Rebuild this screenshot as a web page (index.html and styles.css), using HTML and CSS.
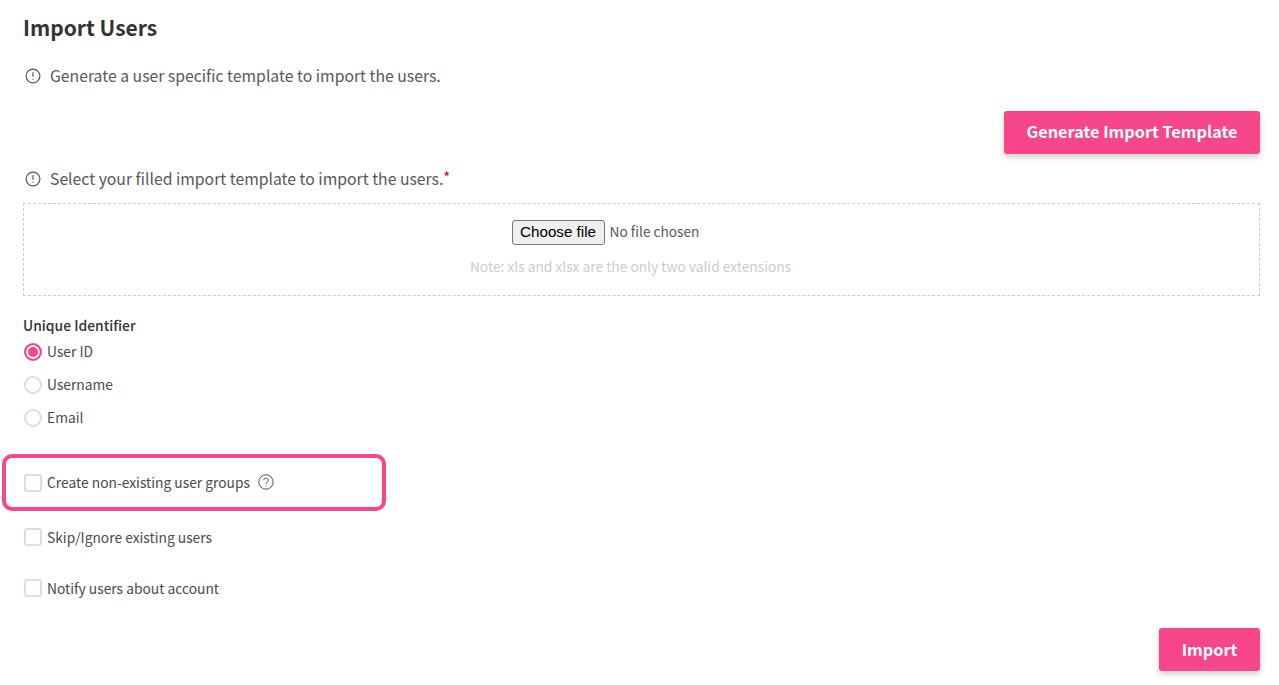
FILE: index.html
```html
<!DOCTYPE html>
<html lang="en">
<head>
    <meta charset="UTF-8">
    <meta name="viewport" content="width=device-width, initial-scale=1.0">
    <title>Import Users</title>
    <link rel="stylesheet" href="styles.css">
</head>
<body>
    <div class="import-page">
        <h1 class="title">Import Users</h1>

        <p class="info info-first">
            <svg class="info-icon" viewBox="0 0 16 16" width="16" height="16"><circle cx="8" cy="8" r="6.9"/><path d="M8 4.2v4.6M8 10.8v1"/></svg>
            <span>Generate a user specific template to import the users.</span>
        </p>

        <div class="template-row">
            <button class="btn btn-template">Generate Import Template</button>
        </div>

        <p class="info info-second">
            <svg class="info-icon" viewBox="0 0 16 16" width="16" height="16"><circle cx="8" cy="8" r="6.9"/><path d="M8 4.2v4.6M8 10.8v1"/></svg>
            <span>Select your filled import template to import the users.<span class="required">*</span></span>
        </p>

        <div class="dropzone">
            <div class="file-row">
                <button class="file-button">Choose file</button>
                <span class="file-name">No file chosen</span>
            </div>
            <div class="file-note">Note: xls and xlsx are the only two valid extensions</div>
        </div>

        <div class="field-label">Unique Identifier</div>
        <div class="radio-group">
            <label class="option"><span class="radio radio-on"></span>User ID</label>
            <label class="option"><span class="radio"></span>Username</label>
            <label class="option"><span class="radio"></span>Email</label>
        </div>

        <div class="checks">
            <label class="option check-groups">
                <span class="checkbox"></span>Create non-existing user groups
                <svg class="help-icon" viewBox="0 0 16 16" width="16" height="16"><circle cx="8" cy="8" r="7.2"/><path d="M5.8 6.2a2.2 2.2 0 1 1 3.4 1.9c-.8.5-1.2.9-1.2 1.9M8 11.6v1"/></svg>
            </label>
            <label class="option check-skip"><span class="checkbox"></span>Skip/Ignore existing users</label>
            <label class="option check-notify"><span class="checkbox"></span>Notify users about account</label>
        </div>

        <div class="import-row">
            <button class="btn btn-import">Import</button>
        </div>

        <div class="highlight"></div>
    </div>
</body>
</html>
```

FILE: styles.css
```css
body {
    margin: 0;
    background-color: #fff;
    color: #4a4a4a;
    font-family: "Noto Sans CJK SC", "Noto Sans", sans-serif;
}

.import-page {
    position: relative;
    height: 685px;
    padding: 0 19px 0 23px;
    overflow: hidden;
    box-sizing: border-box;
}

.title {
    margin: 0;
    padding-top: 11px;
    font-size: 21px;
    line-height: 33px;
    font-weight: 700;
    color: #333;
}

.info {
    display: flex;
    align-items: center;
    margin: 0;
    font-size: 15.75px;
    line-height: 26px;
    color: #585858;
}

.info-first {
    margin-top: 19px;
}

.info-second {
    margin-top: 12px;
}

.info-icon {
    margin: 0 9px 0 2px;
    fill: none;
    stroke: #555;
    stroke-width: 1.2;
}

.required {
    position: relative;
    top: -2px;
    color: #d0021b;
    font-size: 15px;
}

.template-row {
    display: flex;
    justify-content: flex-end;
    margin-top: 22px;
}

.import-row {
    display: flex;
    justify-content: flex-end;
    margin-top: 30px;
}

.btn {
    height: 43px;
    padding-bottom: 3px;
    border: none;
    border-radius: 3px;
    background-color: #f7468a;
    box-shadow: 0 3px 6px rgba(0, 0, 0, 0.2);
    color: #fff;
    font-family: inherit;
    font-size: 16.3px;
    font-weight: 700;
}

.btn-template {
    width: 256px;
    padding-bottom: 5px;
}

.btn-import {
    width: 101px;
}

.dropzone {
    height: 93px;
    margin-top: 11px;
    border: 1px dashed #ccc;
    box-sizing: border-box;
    text-align: center;
}

.file-row {
    display: flex;
    justify-content: center;
    align-items: center;
    padding-top: 16px;
    padding-right: 72px;
}

.file-button {
    width: 93px;
    height: 25px;
    padding: 0 0 3px;
    border: 1px solid #777;
    border-radius: 3px;
    background-color: #efefef;
    color: #000;
    font-family: "Liberation Sans", Arial, sans-serif;
    font-size: 15.2px;
}

.file-name {
    margin-left: 5px;
    padding-bottom: 4px;
    font-size: 13.7px;
    color: #585858;
}

.file-note {
    margin-top: 11px;
    padding-right: 22px;
    font-size: 13.75px;
    line-height: 20px;
    color: #ccc;
}

.field-label {
    margin-top: 19px;
    font-size: 13.9px;
    line-height: 20px;
    font-weight: 500;
    color: #333;
}

.radio-group {
    display: flex;
    flex-direction: column;
    gap: 13px;
    margin-top: 6px;
}

.option {
    display: flex;
    align-items: center;
    font-size: 13.8px;
    line-height: 20px;
    color: #4a4a4a;
}

.radio,
.checkbox {
    flex: none;
    width: 18px;
    height: 18px;
    margin: 0 5px 0 1px;
    border: 2px solid #d8dee6;
    box-sizing: border-box;
    background-color: #fff;
}

.radio {
    margin-top: 2px;
    border-radius: 50%;
}

.radio-on {
    border-color: #f7468a;
    background-color: #f7468a;
    box-shadow: inset 0 0 0 2px #fff;
}

.checkbox {
    border-radius: 3px;
}

.check-groups .checkbox {
    margin-top: 2px;
}

.checks {
    display: flex;
    flex-direction: column;
}

.check-groups {
    margin-top: 45px;
}

.check-skip {
    margin-top: 35px;
}

.check-notify {
    margin-top: 31px;
}

.help-icon {
    margin-left: 8px;
    fill: none;
    stroke: #555;
    stroke-width: 1;
}

.highlight {
    position: absolute;
    left: 2px;
    top: 454px;
    width: 384px;
    height: 57px;
    border: 4px solid #f7468a;
    border-radius: 10px;
    box-sizing: border-box;
}
```
